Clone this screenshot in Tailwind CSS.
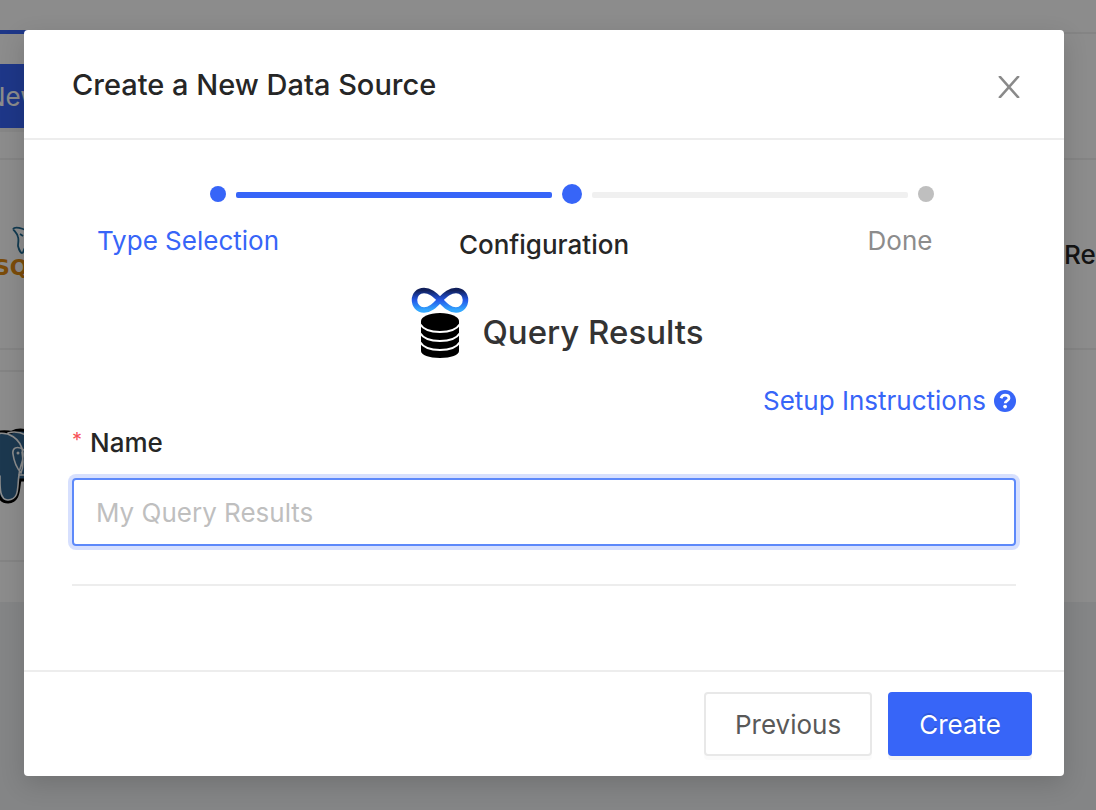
<!DOCTYPE html>
<html lang="en">
<head>
<meta charset="utf-8">
<title>Create a New Data Source</title>
<script src="https://cdn.jsdelivr.net/npm/@tailwindcss/browser@4"></script>
</head>
<body class="font-['Inter',sans-serif] text-[26px] text-[#262626] bg-[#f0f2f4] overflow-hidden">

<!-- Settings page behind the dialog -->
<div class="fixed inset-0 bg-[#f0f2f4] overflow-hidden" aria-hidden="true">
  <div class="bg-white">
    <div class="h-8"></div>
    <div class="relative border-t-2 border-[#f0f0f0]">
      <div class="absolute -top-1 left-0 h-1 w-24 bg-[#3765f8]"></div>
    </div>
    <div class="flex h-[124px] items-start pt-[30px]">
      <button type="button" tabindex="-1" class="h-16 w-24 overflow-hidden bg-[#3765f8] text-left -indent-3.5 text-white shadow-[0_4px_0_rgba(0,0,0,0.045)]">New</button>
    </div>
    <div class="grid grid-cols-2 gap-y-5 pb-10">
      <div class="h-48 border-y-2 border-[#f0f0f0] pt-[66px]">
        <svg class="ml-3 block h-7 w-16" viewBox="0 0 64 28" fill="none" stroke="#1f6a92" stroke-width="1.8" stroke-linejoin="round">
          <path d="M1 3C3 0 8 2 11 3c3 1 8 3 13 7M1 3c2 3 4 4 5 8 1 3 0 6 0 9 1 4 3 7 4 7 2 0 1-3 3-5M8 8l3 2"/>
        </svg>
        <div class="mt-1.5 -ml-1.5 font-['DejaVu_Sans',sans-serif] text-[22px] leading-4 font-bold text-[#e08a12]">SQ</div>
      </div>
      <div class="flex h-48 items-center justify-end border-y-2 border-[#f0f0f0] font-medium"><span class="w-8 whitespace-nowrap">Re</span></div>
      <div class="h-48 border-y-2 border-[#f0f0f0] pt-14">
        <svg class="block h-20 w-16" viewBox="0 0 64 80" fill="none" stroke-linecap="round">
          <path d="M-4 5C5 2 10 5 12 4c8-4 18-1 26 4v44H20c-2 8 0 21-12 22-9 0-10-9-12-16Z" fill="#336791" stroke="#000" stroke-width="3"/>
          <path d="M-4 6C8 3 21 10 23 25c1 10-4 13-4 22-2 12 1 24-11 25-9 0-8-15-8-24M8 5c6-2 12-1 18 2M24 22c-7-5-12-2-11 4 1 8 3 13 8 19 3-7 2-15 1-21M19 47h9" stroke="#fff" stroke-width="1.6"/>
          <circle cx="18" cy="25" r="1.500" fill="#fff"/>
        </svg>
      </div>
    </div>
  </div>
</div>

<!-- Dialog over the dimmed page -->
<div class="fixed inset-0 overflow-auto bg-black/45 pt-[30px] pr-8 pl-6">
  <div role="dialog" aria-modal="true" aria-labelledby="dialog-title" class="rounded-sm bg-white shadow-[0_8px_24px_rgba(0,0,0,0.15)]">
    <header class="flex h-[110px] items-center justify-between border-b-2 border-[#ededed] pt-0.5 pr-11 pl-12">
      <h1 id="dialog-title" class="text-[29px] leading-11 font-medium">Create a New Data Source</h1>
      <button type="button" aria-label="Close" class="mt-1 text-[#8a8a8a]">
        <svg class="block h-[22px] w-[22px]" viewBox="0 0 22 22" fill="none" stroke="currentColor" stroke-width="2.6"><path d="M1.2 0 20.8 22M20.8 0 1.2 22"/></svg>
      </button>
    </header>

    <div class="min-h-[530px] px-12 pt-11">
      <div class="flex items-start gap-2.5 pr-[82px] pl-[138px]" aria-hidden="true">
        <span class="mt-0.5 size-4 rounded-full bg-[#3765f8]"></span>
        <span class="mt-2 h-1.5 flex-1 rounded-[2px] bg-[#3765f8]"></span>
        <span class="size-5 rounded-full bg-[#3765f8]"></span>
        <span class="mt-2 h-1.5 flex-1 rounded-[2px] bg-[#f0f0f0]"></span>
        <span class="mt-0.5 size-4 rounded-full bg-[#bfbfbf]"></span>
      </div>
      <ol class="mt-4 flex items-start justify-between text-center leading-[42px]">
        <li class="w-[232px] text-[#3765f8]">Type Selection</li>
        <li class="mt-1 w-[232px] font-medium" aria-current="step">Configuration</li>
        <li class="w-[232px] text-[#8c8c8c]">Done</li>
      </ol>

      <div class="mt-[21px] flex items-start justify-center gap-3 pl-[26px]">
        <svg class="block h-[72px] w-[60px]" viewBox="0 0 60 72">
          <defs><linearGradient id="loop" x1="0" y1="0" x2="0" y2="1"><stop offset="0" stop-color="#11205c"/><stop offset=".5" stop-color="#2459e8"/><stop offset="1" stop-color="#34a8ff"/></linearGradient></defs>
          <path d="M30 13C24 7 20 3.500 14 3.500C8 3.500 4.500 8 4.500 13S8 23 14 23C20 23 24 19 30 13C36 7 40 3.500 46 3.500C52 3.500 55.500 8 55.500 13S52 23 46 23C40 23 36 19 30 13Z" fill="none" stroke="url(#loop)" stroke-width="5.500"/>
          <path d="M11 62v2c0 4 8 7 19 7s19-3 19-7V34c0-4-8-8-19-8s-19 4-19 8Z" fill="#000"/>
          <g fill="none" stroke="#fff" stroke-width="2"><path d="M10 37c3 5 10 8 20 8s17-3 20-8M10 46c3 5 10 8 20 8s17-3 20-8M10 55c3 5 10 8 20 8s17-3 20-8"/></g>
        </svg>
        <h2 class="mt-[23px] text-[33px] leading-11 font-medium text-[#333]">Query Results</h2>
      </div>

      <div class="mt-[21px] flex justify-end">
        <a href="#" class="flex items-center gap-2 leading-[42px] text-[#3765f8]">Setup Instructions
          <svg class="block size-[22px]" viewBox="0 0 22 22"><circle cx="11" cy="11" r="11" fill="currentColor"/><path d="M7 8.200C7.800 6 9 5.200 11 5.200c2.400 0 4 1.200 4 3 0 2.800-3.800 2.600-3.800 5" fill="none" stroke="#fff" stroke-width="2.800"/><circle cx="11.100" cy="16.600" r="1.900" fill="#fff"/></svg>
        </a>
      </div>

      <form id="source-form">
        <label for="name" class="flex gap-2 leading-[42px] font-medium"><span class="text-xl leading-9 font-normal text-[#f5222d]/80" aria-hidden="true">*</span>Name</label>
        <input id="name" type="text" required placeholder="My Query Results" class="mt-3.5 block h-[68px] w-full rounded border-2 border-[#5d89fa] px-[22px] shadow-[0_0_0_4px_rgba(55,101,248,0.2)] outline-none placeholder:text-[#bfbfbf]">
      </form>
      <hr class="mt-[38px] border-t-2 border-[#ededed]">
    </div>

    <footer class="flex justify-end gap-4 border-t-2 border-[#ededed] px-8 py-5">
      <button type="button" class="h-16 rounded border-2 border-[#e8e8e8] px-[29px] text-[#595959] shadow-[0_4px_0_rgba(0,0,0,0.016)]">Previous</button>
      <button type="submit" form="source-form" class="h-16 rounded bg-[#3765f8] px-[31px] text-white shadow-[0_4px_0_rgba(0,0,0,0.045)] text-shadow-[0_-2px_0_rgba(0,0,0,0.12)]">Create</button>
    </footer>
  </div>
</div>
</body>
</html>
